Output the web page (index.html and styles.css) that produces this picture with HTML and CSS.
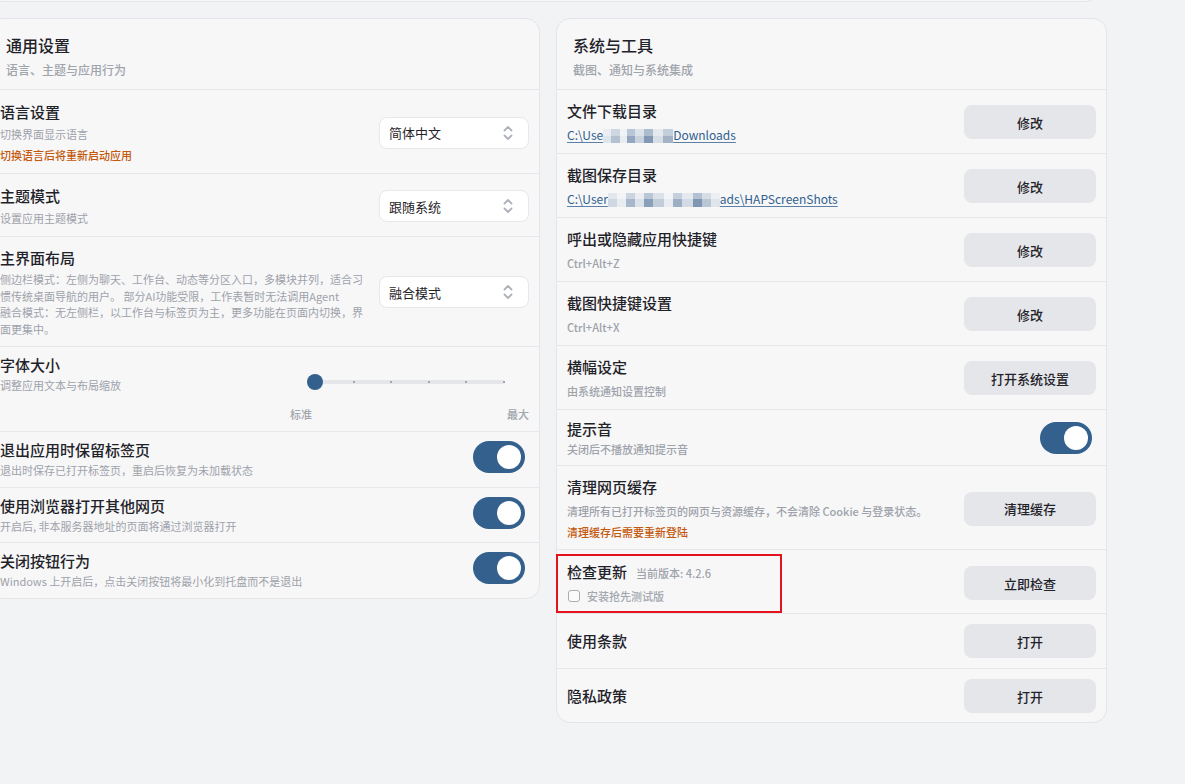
FILE: index.html
```html
<!DOCTYPE html>
<html lang="zh-CN">
<head>
    <meta charset="UTF-8">
    <meta name="viewport" content="width=device-width, initial-scale=1.0">
    <title>设置</title>
    <link rel="stylesheet" href="styles.css">
</head>
<body>
    <div class="layout">
        <div class="card card-top"></div>

        <section class="card">
            <header class="card-head">
                <h2>通用设置</h2>
                <p>语言、主题与应用行为</p>
            </header>
            <div class="row row-lang">
                <div class="info">
                    <div class="title">语言设置</div>
                    <div class="desc">切换界面显示语言</div>
                    <div class="warn">切换语言后将重新启动应用</div>
                </div>
                <div class="select">
                    <span>简体中文</span>
                    <svg width="10" height="18" viewBox="0 0 10 18"><path d="M1.5 6.5L5 3l3.5 3.5M1.5 11.5L5 15l3.5-3.5"/></svg>
                </div>
            </div>
            <div class="row row-theme">
                <div class="info">
                    <div class="title">主题模式</div>
                    <div class="desc">设置应用主题模式</div>
                </div>
                <div class="select">
                    <span>跟随系统</span>
                    <svg width="10" height="18" viewBox="0 0 10 18"><path d="M1.5 6.5L5 3l3.5 3.5M1.5 11.5L5 15l3.5-3.5"/></svg>
                </div>
            </div>
            <div class="row row-layout">
                <div class="info">
                    <div class="title">主界面布局</div>
                    <div class="desc long">侧边栏模式：左侧为聊天、工作台、动态等分区入口，多模块并列，适合习惯传统桌面导航的用户。 部分AI功能受限，工作表暂时无法调用Agent<br>融合模式：无左侧栏，以工作台与标签页为主，更多功能在页面内切换，界面更集中。</div>
                </div>
                <div class="select">
                    <span>融合模式</span>
                    <svg width="10" height="18" viewBox="0 0 10 18"><path d="M1.5 6.5L5 3l3.5 3.5M1.5 11.5L5 15l3.5-3.5"/></svg>
                </div>
            </div>
            <div class="row row-font">
                <div class="info">
                    <div class="title">字体大小</div>
                    <div class="desc">调整应用文本与布局缩放</div>
                </div>
                <div class="slider">
                    <div class="track">
                        <div class="ticks"><i></i><i></i><i></i><i></i><i></i><i></i></div>
                        <span class="thumb"></span>
                    </div>
                    <div class="scale"><span>标准</span><span>最大</span></div>
                </div>
            </div>
            <div class="row row-switch">
                <div class="info">
                    <div class="title">退出应用时保留标签页</div>
                    <div class="desc">退出时保存已打开标签页，重启后恢复为未加载状态</div>
                </div>
                <span class="switch"></span>
            </div>
            <div class="row row-switch">
                <div class="info">
                    <div class="title">使用浏览器打开其他网页</div>
                    <div class="desc">开启后, 非本服务器地址的页面将通过浏览器打开</div>
                </div>
                <span class="switch"></span>
            </div>
            <div class="row row-switch">
                <div class="info">
                    <div class="title">关闭按钮行为</div>
                    <div class="desc">Windows 上开启后，点击关闭按钮将最小化到托盘而不是退出</div>
                </div>
                <span class="switch"></span>
            </div>
        </section>

        <section class="card card-sys">
            <header class="card-head">
                <h2>系统与工具</h2>
                <p>截图、通知与系统集成</p>
            </header>
            <div class="row">
                <div class="info">
                    <div class="title">文件下载目录</div>
                    <a class="path">C:\Use<span class="mosaic mosaic-a"></span>Downloads</a>
                </div>
                <button class="btn">修改</button>
            </div>
            <div class="row">
                <div class="info">
                    <div class="title">截图保存目录</div>
                    <a class="path">C:\User<span class="mosaic mosaic-b"></span>ads\HAPScreenShots</a>
                </div>
                <button class="btn">修改</button>
            </div>
            <div class="row">
                <div class="info">
                    <div class="title">呼出或隐藏应用快捷键</div>
                    <div class="desc">Ctrl+Alt+Z</div>
                </div>
                <button class="btn">修改</button>
            </div>
            <div class="row">
                <div class="info">
                    <div class="title">截图快捷键设置</div>
                    <div class="desc">Ctrl+Alt+X</div>
                </div>
                <button class="btn">修改</button>
            </div>
            <div class="row">
                <div class="info">
                    <div class="title">横幅设定</div>
                    <div class="desc">由系统通知设置控制</div>
                </div>
                <button class="btn">打开系统设置</button>
            </div>
            <div class="row row-sound">
                <div class="info">
                    <div class="title">提示音</div>
                    <div class="desc">关闭后不播放通知提示音</div>
                </div>
                <span class="switch"></span>
            </div>
            <div class="row row-cache">
                <div class="info">
                    <div class="title">清理网页缓存</div>
                    <div class="desc">清理所有已打开标签页的网页与资源缓存，不会清除 Cookie 与登录状态。</div>
                    <div class="warn">清理缓存后需要重新登陆</div>
                </div>
                <button class="btn">清理缓存</button>
            </div>
            <div class="row row-update">
                <div class="info update-info">
                    <div class="title-line">
                        <span class="title">检查更新</span>
                        <span class="version">当前版本: 4.2.6</span>
                    </div>
                    <label class="check"><span class="box"></span>安装抢先测试版</label>
                </div>
                <button class="btn">立即检查</button>
            </div>
            <div class="row row-plain">
                <div class="info"><div class="title">使用条款</div></div>
                <button class="btn">打开</button>
            </div>
            <div class="row row-plain row-last">
                <div class="info"><div class="title">隐私政策</div></div>
                <button class="btn">打开</button>
            </div>
        </section>
    </div>
</body>
</html>
```

FILE: styles.css
```css
* {
    box-sizing: border-box;
}
html, body {
    margin: 0;
    height: 100%;
}
body {
    background: #f2f3f5;
    font-family: "Noto Sans CJK SC", "Noto Sans", sans-serif;
    color: #1f2329;
    overflow: hidden;
}
.layout {
    display: grid;
    grid-template-columns: 1fr 1fr;
    gap: 16px;
    width: 1118px;
    margin: -38px 0 0 -11px;
    align-items: start;
}
.card {
    background: #f7f7f8;
    border: 1px solid #e3e5e8;
    border-radius: 14px;
}
.card-top {
    grid-column: 1 / -1;
    height: 40px;
    margin-right: 7px;
}
.card-head {
    padding: 14px 16px 10px;
}
.card-head h2 {
    margin: 0;
    font-size: 16px;
    line-height: 24px;
    font-weight: 500;
}
.card-head p {
    margin: 4px 0 0;
    font-family: "Noto Sans CJK SC Medium", "Noto Sans CJK SC", sans-serif;
    font-size: 12px;
    line-height: 18px;
    color: #a0a4ab;
    font-weight: 500;
}

/* rows */
.row {
    display: flex;
    align-items: center;
    gap: 10px;
    padding: 10px 10px 9px;
    border-top: 1px solid #e6e7ea;
}
.info {
    flex: 1;
    min-width: 0;
}
.title {
    font-size: 15px;
    line-height: 22px;
    font-weight: 500;
}
.desc {
    font-size: 11px;
    line-height: 18px;
    color: #9ea2aa;
    margin-top: 4px;
}
.warn {
    font-family: "Noto Sans CJK SC Medium", "Noto Sans CJK SC", sans-serif;
    font-size: 11px;
    line-height: 18px;
    color: #c4580b;
    margin-top: 3px;
}
.card-sys .desc {
    font-family: "Noto Sans CJK SC Medium", "Noto Sans CJK SC", sans-serif;
    font-weight: 500;
}
.row-lang, .row-theme {
    padding-top: 11px;
}
.row-lang .desc, .row-theme .desc {
    margin-top: 2px;
}
.row-layout {
    padding-top: 10px;
}
.desc.long {
    margin-top: 2px;
    line-height: 16.5px;
}
.row-switch {
    padding: 7px 10px 7.5px;
}
.row-switch .switch {
    margin-bottom: 4px;
}
.row-switch .desc, .row-font .desc, .row-sound .desc {
    margin-top: 0;
}
.row-sound {
    padding: 8px 10px 7px;
}
.row-cache {
    padding-bottom: 8px;
}
.row-update {
    padding: 11px 10px 8px;
}
.row-plain {
    padding: 10px;
}
.row-last {
    padding-bottom: 9px;
}

/* controls */
.select {
    flex: none;
    width: 150px;
    height: 32px;
    background: #fff;
    border: 1px solid #e7e8eb;
    border-radius: 8px;
    display: flex;
    align-items: center;
    justify-content: space-between;
    padding: 0 15px 0 9px;
    font-size: 13px;
}
.select svg path {
    fill: none;
    stroke: #aeb2b9;
    stroke-width: 1.8;
    stroke-linecap: round;
    stroke-linejoin: round;
}
.switch {
    flex: none;
    position: relative;
    width: 52px;
    height: 32px;
    margin-right: 4px;
    border-radius: 16px;
    background: #33608c;
}
.switch::after {
    content: "";
    position: absolute;
    top: 4px;
    right: 4px;
    width: 24px;
    height: 24px;
    border-radius: 50%;
    background: #fff;
}
.btn {
    flex: none;
    width: 132px;
    height: 34px;
    border: 0;
    border-radius: 8px;
    background: #e5e6ea;
    color: #1f2329;
    font-family: inherit;
    font-size: 13px;
    font-weight: 500;
    padding: 0;
}

/* font size slider */
.row-font {
    align-items: flex-start;
    padding: 7px 10px 8px;
}
.slider {
    flex: none;
    width: 239px;
}
.track {
    position: relative;
    height: 16px;
    margin: 20px 24px 0 25px;
    display: flex;
    align-items: center;
}
.track::before {
    content: "";
    position: absolute;
    left: 0;
    right: 0;
    top: 6px;
    height: 4px;
    border-radius: 2px;
    background: #e5e6ea;
}
.ticks {
    position: relative;
    width: 100%;
    display: flex;
    justify-content: space-between;
}
.ticks i {
    width: 2px;
    height: 2px;
    background: #a4a8ae;
}
.thumb {
    position: absolute;
    left: -8px;
    top: 0;
    width: 16px;
    height: 16px;
    border-radius: 50%;
    background: #33608c;
}
.scale {
    display: flex;
    justify-content: space-between;
    margin-top: 15px;
    font-family: "Noto Sans CJK SC Medium", "Noto Sans CJK SC", sans-serif;
    font-size: 11px;
    line-height: 18px;
    color: #a2a6ad;
    font-weight: 500;
}

/* directory paths */
.path {
    display: block;
    margin-top: 4px;
    font-size: 12px;
    line-height: 18px;
    color: #2f5f8f;
    text-decoration: underline;
    text-decoration-color: #5b7fa5;
    text-underline-offset: 2px;
}
.mosaic {
    display: inline-block;
    height: 14px;
    vertical-align: -3px;
}
.mosaic-a {
    width: 70px;
    background:
        linear-gradient(180deg, rgba(255,255,255,0.35) 0 50%, transparent 50%),
        linear-gradient(90deg, #dfe5ec 0 12%, #b3c1d1 12% 24%, #e9edf1 24% 34%, #93a8c0 34% 46%, #c9d3de 46% 58%, #8199b4 58% 72%, #d7dee6 72% 86%, #a2b3c6 86% 100%);
}
.mosaic-b {
    width: 112px;
    background:
        linear-gradient(180deg, rgba(255,255,255,0.4) 0 45%, transparent 45%),
        linear-gradient(90deg, #cfd8e2 0 8%, #e9edf1 8% 16%, #a8b8ca 16% 24%, #dce2e9 24% 32%, #8aa0b9 32% 40%, #c2cdd9 40% 50%, #e9edf1 50% 58%, #9cafc4 58% 66%, #d3dbe4 66% 76%, #7f97b2 76% 84%, #bac6d4 84% 92%, #dfe5eb 92% 100%);
}

/* update check */
.update-info {
    position: relative;
}
.update-info::after {
    content: "";
    position: absolute;
    left: -11px;
    top: -7px;
    width: 222px;
    height: 55px;
    border: 2px solid #e4121c;
}
.title-line {
    display: flex;
    align-items: baseline;
    gap: 9px;
}
.version {
    font-family: "Noto Sans CJK SC Medium", "Noto Sans CJK SC", sans-serif;
    font-size: 11px;
    color: #9ea2aa;
    font-weight: 500;
}
.check {
    display: flex;
    align-items: center;
    gap: 7px;
    margin-top: 4px;
    font-family: "Noto Sans CJK SC Medium", "Noto Sans CJK SC", sans-serif;
    font-size: 11px;
    line-height: 18px;
    color: #a2a6ad;
    font-weight: 500;
}
.box {
    width: 12px;
    height: 12px;
    margin-left: 1px;
    border: 1.5px solid #a9adb4;
    border-radius: 3px;
    background: #fbfbfc;
}
```
